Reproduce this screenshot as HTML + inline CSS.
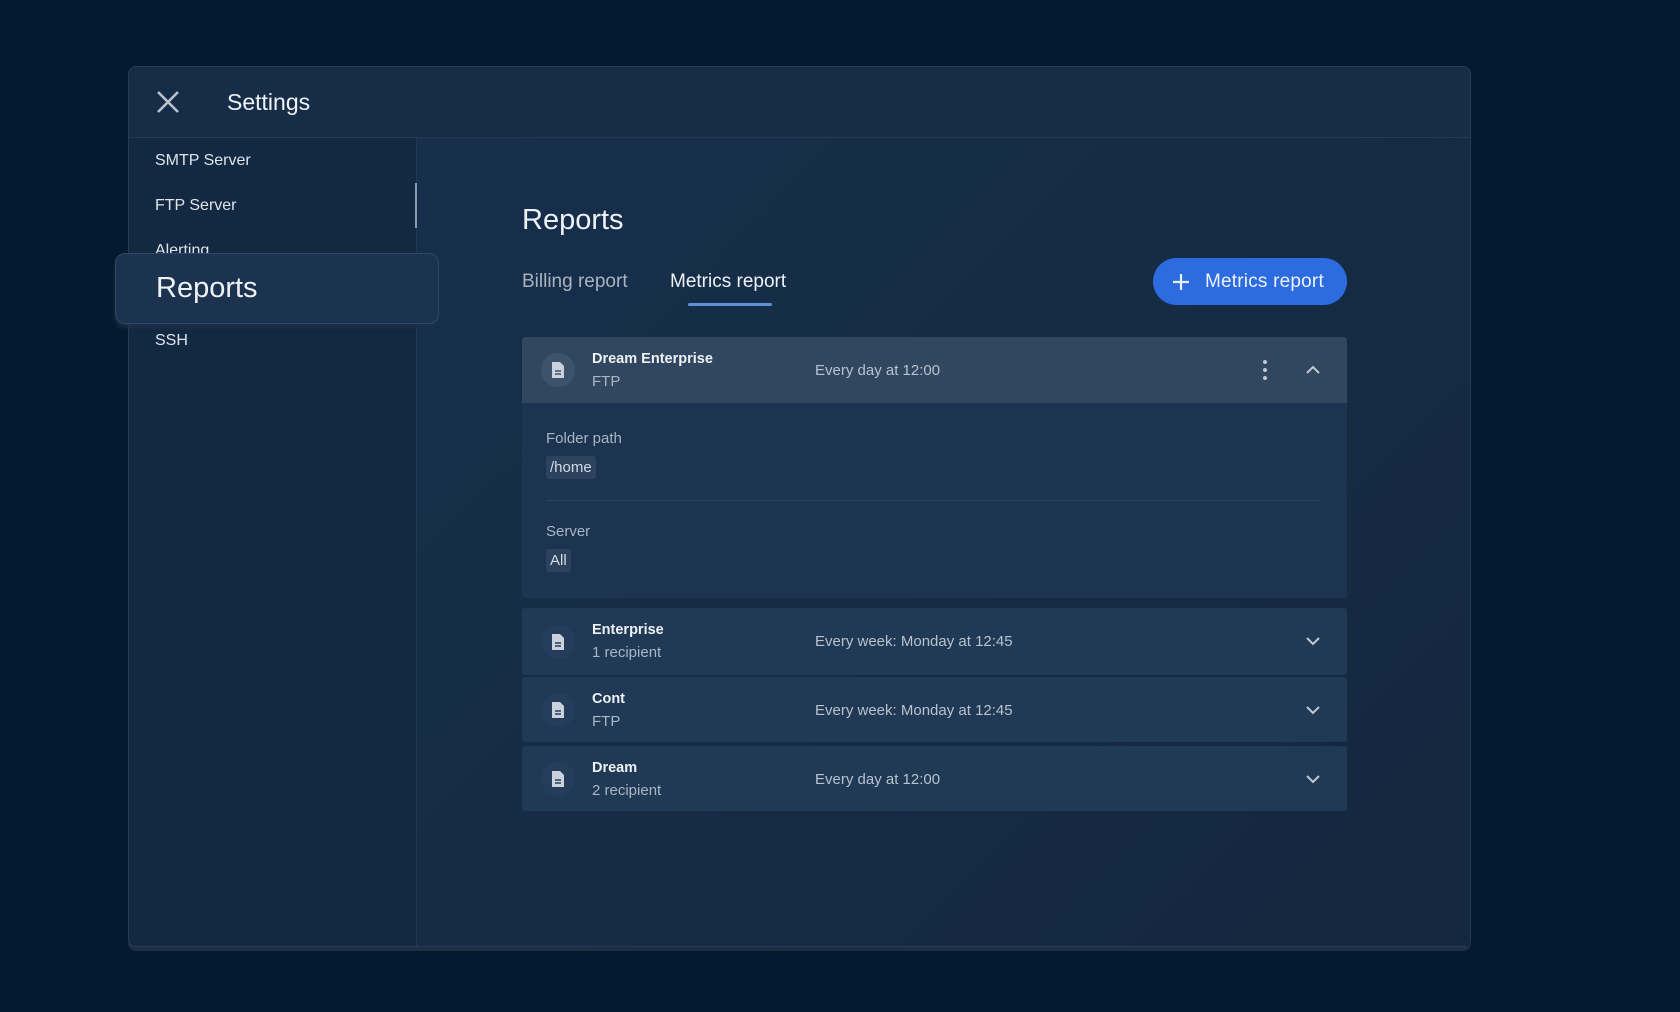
<!DOCTYPE html>
<html><head><meta charset="utf-8"><style>
*{box-sizing:border-box;margin:0;padding:0}
body{width:1680px;height:1012px;background:#041a30;font-family:"Liberation Sans",sans-serif;position:relative;overflow:hidden;color:#e6ebf0}
.abs{position:absolute}
.card{left:128px;top:66px;width:1343px;height:881px;background:#132841;border:1px solid #263b54;border-radius:8px;box-shadow:0 4px 0 #1c2f45}
.hdr{left:129px;top:67px;width:1341px;height:71px;background:#172d47;border-bottom:1px solid #243a54;border-radius:8px 8px 0 0}
.side{left:416px;top:138px;width:1px;height:808px;background:#233851}
.main{left:417px;top:138px;width:1053px;height:808px;background:linear-gradient(135deg,#172f4b,#14283f)}
.nav{left:155px;font-size:16px;color:#dfe5ec}
.t{font-size:15px}
.row{left:522px;width:825px;background:#203955;border-radius:3px}
.ic{width:34px;height:34px;border-radius:50%;background:#2a4260;left:19px;top:16px}
.nm{left:70px;top:14px;font-size:14.5px;font-weight:bold;color:#eef2f6}
.sb{left:70px;top:36px;font-size:15px;color:#a9b6c4}
.tm{left:293px;top:25px;font-size:15px;color:#b7c2ce}
.chev{left:782px;top:24px}
.chip{background:#2d435d;border-radius:3px;padding:3px 4px;font-size:15px;color:#d3dbe4}
</style></head><body>
<div class="abs card"></div>
<div class="abs hdr"></div>
<div class="abs main"></div>
<div class="abs side"></div>
<svg class="abs" style="left:156px;top:90px" width="24" height="24" viewBox="0 0 24 24"><path d="M2 2L22 22M22 2L2 22" stroke="#b9c3cf" stroke-width="2.6"/></svg>
<div class="abs" style="left:227px;top:89px;font-size:23px;color:#eef2f6">Settings</div>
<div class="abs nav" style="top:152px">SMTP Server</div>
<div class="abs nav" style="top:197px">FTP Server</div>
<div class="abs nav" style="top:242px">Alerting</div>
<div class="abs nav" style="top:332px">SSH</div>
<div class="abs" style="left:415px;top:183px;width:2px;height:45px;background:#8a9bb0"></div>
<div class="abs" style="left:115px;top:253px;width:324px;height:71px;background:#1c3350;border:1px solid #2f4866;border-radius:10px;box-shadow:0 4px 4px rgba(30,50,75,.8)"></div>
<div class="abs" style="left:156px;top:272px;font-size:29px;font-weight:500;color:#eef2f6">Reports</div>
<div class="abs" style="left:522px;top:204px;font-size:29px;color:#eef2f6">Reports</div>
<div class="abs" style="left:522px;top:271px;font-size:19px;color:#a7b3c1">Billing report</div>
<div class="abs" style="left:670px;top:271px;font-size:19px;color:#eef2f6">Metrics report</div>
<div class="abs" style="left:688px;top:303px;width:84px;height:3px;background:#5f8fd6;border-radius:2px"></div>
<div class="abs" style="left:1153px;top:258px;width:194px;height:47px;background:#2d6be0;border-radius:24px"></div>
<svg class="abs" style="left:1171px;top:272px" width="20" height="20"><path d="M10 2V18M2 10H18" stroke="#e8eef8" stroke-width="2.2"/></svg>
<div class="abs" style="left:1205px;top:271px;font-size:19px;color:#eef2f8;letter-spacing:.2px">Metrics report</div>

<div class="abs row" style="top:337px;height:261px;background:#1c3450">
 <div class="abs" style="left:0;top:0;width:825px;height:66px;background:#31475f;border-radius:3px 3px 0 0"></div>
 <div class="abs ic" style="background:#3d536c"></div>
 <svg class="abs" style="left:28px;top:24px" width="16" height="18" viewBox="0 0 16 18"><path d="M2 1H10L14 5V17H2Z" fill="#c9d2dc"/><path d="M5 10H11M5 13H11" stroke="#3d536c" stroke-width="1.4"/></svg>
 <div class="abs nm">Dream Enterprise</div><div class="abs sb">FTP</div>
 <div class="abs tm">Every day at 12:00</div>
 <svg class="abs" style="left:740px;top:22px" width="6" height="22"><circle cx="3" cy="3" r="2" fill="#c0c9d4"/><circle cx="3" cy="11" r="2" fill="#c0c9d4"/><circle cx="3" cy="19" r="2" fill="#c0c9d4"/></svg>
 <svg class="abs chev" width="18" height="18"><path d="M3 12L9 6L15 12" stroke="#c0c9d4" stroke-width="2" fill="none"/></svg>
 <div class="abs t" style="left:24px;top:93px;color:#a9b6c4">Folder path</div>
 <div class="abs chip" style="left:24px;top:119px">/home</div>
 <div class="abs" style="left:24px;top:163px;width:775px;height:1px;background:#2a4361"></div>
 <div class="abs t" style="left:24px;top:186px;color:#a9b6c4">Server</div>
 <div class="abs chip" style="left:24px;top:212px">All</div>
</div>

<div class="abs row" style="top:608px;height:67px">
 <div class="abs ic" style="top:17px;background:#253d5a"></div>
 <svg class="abs" style="left:28px;top:25px" width="16" height="18" viewBox="0 0 16 18"><path d="M2 1H10L14 5V17H2Z" fill="#c9d2dc"/><path d="M5 10H11M5 13H11" stroke="#253d5a" stroke-width="1.4"/></svg>
 <div class="abs nm">Enterprise</div><div class="abs sb">1 recipient</div>
 <div class="abs tm">Every week: Monday at 12:45</div>
 <svg class="abs chev" width="18" height="18"><path d="M3 6L9 12L15 6" stroke="#c0c9d4" stroke-width="2" fill="none"/></svg>
</div>
<div class="abs row" style="top:677px;height:65px">
 <div class="abs ic" style="background:#253d5a"></div>
 <svg class="abs" style="left:28px;top:24px" width="16" height="18" viewBox="0 0 16 18"><path d="M2 1H10L14 5V17H2Z" fill="#c9d2dc"/><path d="M5 10H11M5 13H11" stroke="#253d5a" stroke-width="1.4"/></svg>
 <div class="abs nm">Cont</div><div class="abs sb">FTP</div>
 <div class="abs tm">Every week: Monday at 12:45</div>
 <svg class="abs chev" width="18" height="18"><path d="M3 6L9 12L15 6" stroke="#c0c9d4" stroke-width="2" fill="none"/></svg>
</div>
<div class="abs row" style="top:746px;height:65px">
 <div class="abs ic" style="background:#253d5a"></div>
 <svg class="abs" style="left:28px;top:24px" width="16" height="18" viewBox="0 0 16 18"><path d="M2 1H10L14 5V17H2Z" fill="#c9d2dc"/><path d="M5 10H11M5 13H11" stroke="#253d5a" stroke-width="1.4"/></svg>
 <div class="abs nm">Dream</div><div class="abs sb">2 recipient</div>
 <div class="abs tm">Every day at 12:00</div>
 <svg class="abs chev" width="18" height="18"><path d="M3 6L9 12L15 6" stroke="#c0c9d4" stroke-width="2" fill="none"/></svg>
</div>
</body></html>
